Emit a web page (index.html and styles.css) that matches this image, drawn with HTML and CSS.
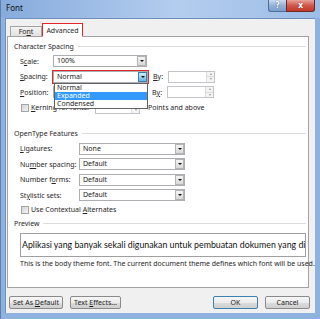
FILE: index.html
```html
<!DOCTYPE html>
<html lang="en">
<head>
    <meta charset="UTF-8">
    <meta name="viewport" content="width=device-width, initial-scale=1.0">
    <title>Font</title>
    <link rel="stylesheet" href="styles.css">
</head>
<body>

    <div class="window">
        <div class="titlebar">
            <span class="title">Font</span>
            <span class="cap-help">?</span>
            <span class="cap-close">x</span>
        </div>

        <div class="client">
            <div class="tabs">
                <span class="tab">Fo<u>n</u>t</span>
                <span class="tab active">Advanced</span>
            </div>

            <div class="panel">
                <div class="group-head"><span>Character Spacing</span></div>

                <div class="row first">
                    <span class="lbl lbl-short">S<u>c</u>ale:</span>
                    <div class="combo combo-mid"><span class="val">100%</span><span class="drop"></span></div>
                </div>

                <div class="row">
                    <span class="lbl lbl-short"><u>S</u>pacing:</span>
                    <div class="combo combo-mid hot">
                        <span class="val">Normal</span><span class="drop"></span>
                        <!-- open list of the spacing combo -->
                        <div class="droplist">
                            <div class="item">Normal</div>
                            <div class="item selected">Expanded</div>
                            <div class="item">Condensed</div>
                        </div>
                    </div>
                    <span class="lbl lbl-by"><u>B</u>y:</span>
                    <div class="spin"><span class="field"></span><span class="arrows"><span class="up"></span><span class="down"></span></span></div>
                </div>

                <div class="row">
                    <span class="lbl lbl-short"><u>P</u>osition:</span>
                    <div class="combo combo-mid"><span class="val">Normal</span><span class="drop"></span></div>
                    <span class="lbl lbl-by">B<u>y</u>:</span>
                    <div class="spin"><span class="field"></span><span class="arrows"><span class="up"></span><span class="down"></span></span></div>
                </div>

                <div class="row">
                    <span class="check"></span>
                    <span class="lbl lbl-kern"><u>K</u>erning for fonts:</span>
                    <div class="spin spin-small"><span class="field"></span><span class="arrows"><span class="up"></span><span class="down"></span></span></div>
                    <span class="lbl lbl-points">Points and above</span>
                </div>

                <div class="group-head gap"><span>OpenType Features</span></div>

                <div class="row first">
                    <span class="lbl lbl-long"><u>L</u>igatures:</span>
                    <div class="combo combo-wide"><span class="val">None</span><span class="drop"></span></div>
                </div>
                <div class="row">
                    <span class="lbl lbl-long">Nu<u>m</u>ber spacing:</span>
                    <div class="combo combo-wide"><span class="val">Default</span><span class="drop"></span></div>
                </div>
                <div class="row">
                    <span class="lbl lbl-long">Number f<u>o</u>rms:</span>
                    <div class="combo combo-wide"><span class="val">Default</span><span class="drop"></span></div>
                </div>
                <div class="row">
                    <span class="lbl lbl-long">St<u>y</u>listic sets:</span>
                    <div class="combo combo-wide"><span class="val">Default</span><span class="drop"></span></div>
                </div>

                <div class="row check-row">
                    <span class="check"></span>
                    <span class="lbl">Use Contextual <u>A</u>lternates</span>
                </div>

                <div class="group-head"><span>Preview</span></div>
                <div class="preview">
                    <span>Aplikasi yang banyak sekali digunakan untuk pembuatan dokumen yang digunakan</span>
                </div>
                <p class="desc">This is the body theme font. The current document theme defines which font will be used.</p>
            </div>

            <div class="button-row">
                <button class="btn btn-default">Set As <u>D</u>efault</button>
                <button class="btn btn-effects">Text <u>E</u>ffects...</button>
                <button class="btn btn-ok">OK</button>
                <button class="btn btn-cancel">Cancel</button>
            </div>
        </div>
    </div>

</body>
</html>
```

FILE: styles.css
```css
* {
    box-sizing: border-box;
}

html,
body {
    margin: 0;
    width: 320px;
    height: 319px;
    overflow: hidden;
}

body {
    font-family: "Noto Sans", sans-serif;
    font-size: 7px;
    color: #262626;
}

u {
    text-decoration-thickness: 0.5px;
    text-underline-offset: 1px;
}

.window {
    width: 320px;
    height: 319px;
    padding: 0 5px 6px 4px;
    display: flex;
    flex-direction: column;
    background: #8fb1dd;
    border-left: 1px solid #5f7fae;
}

/* title bar */
.titlebar {
    height: 18px;
    flex: none;
    display: flex;
    align-items: flex-start;
    background: linear-gradient(to right, #86abdc, #b4cdef 55%, #9dbde6);
    margin: 0 -5px 0 -4px;
    padding: 0 5px 0 4px;
}

.title {
    margin-left: 1px;
    margin-top: 3px;
    margin-right: auto;
    font-size: 8px;
    line-height: 10px;
    color: #111;
}

.cap-help,
.cap-close {
    height: 12px;
    display: flex;
    align-items: center;
    justify-content: center;
    color: #fff;
    font-family: "DejaVu Sans", sans-serif;
    font-weight: bold;
    font-size: 8px;
    text-shadow: 0 0 1px #223;
}

.cap-help {
    width: 18px;
    background: linear-gradient(to bottom, #c9dbf1, #93b2da 50%, #7b9fcf);
    border: 1px solid #4e6c95;
    border-right: none;
    border-top: none;
    border-radius: 0 0 0 3px;
}

.cap-close {
    width: 29px;
    background: linear-gradient(to bottom, #e8a399, #d0574a 50%, #c0392c);
    border: 1px solid #6f2a24;
    border-top: none;
    border-radius: 0 0 3px 0;
}

/* dialog body */
.client {
    flex: 1;
    background: #f0f0f0;
    border-left: 1px solid #6f8fbd;
    border-top: 1px solid #6f8fbd;
    display: flex;
    flex-direction: column;
}

.tabs {
    display: flex;
    align-items: flex-end;
    height: 13px;
    margin-top: 4px;
    padding-left: 4px;
    position: relative;
    z-index: 2;
}

.tab {
    height: 10px;
    width: 32px;
    display: flex;
    align-items: center;
    justify-content: center;
    background: linear-gradient(to bottom, #f3f3f3, #e2e2e2);
    border: 1px solid #a3a3a3;
    border-bottom: none;
}

.tab.active {
    width: 41px;
    height: 14px;
    margin-bottom: -1px;
    background: #fff;
    border: 1.5px solid #e3262a;
    border-bottom: 1px solid #fff;
}

.panel {
    margin-left: 1px;
    width: 302px;
    height: 252px;
    background: #fff;
    border: 1px solid #a3a3a3;
    position: relative;
}

.group-head {
    height: 12px;
    margin-top: 3px;
    padding-left: 6px;
    padding-right: 2px;
    display: flex;
    align-items: center;
}

.group-head::after {
    content: "";
    flex: 1;
    height: 1px;
    margin-left: 4px;
    background: #dcdcdc;
}

.group-head.gap {
    margin-top: 14px;
}

.row {
    height: 12px;
    margin-top: 3px;
    padding-left: 12px;
    display: flex;
    align-items: center;
}

.row + .row {
    margin-top: 3.5px;
}

.check-row {
    height: 10px;
    margin-top: 4px;
}

.lbl {
    white-space: nowrap;
}

.lbl-short {
    width: 33px;
}

.lbl-long {
    width: 59px;
}

.lbl-by {
    width: 15px;
    margin-left: 5px;
}

.lbl-kern {
    width: 64px;
}

.lbl-points {
    margin-left: 8px;
}

/* combo boxes */
.combo {
    position: relative;
    height: 12px;
    display: flex;
    align-items: stretch;
    background: #fff;
    border: 1px solid #abadb3;
}

.combo-mid {
    width: 94px;
}

.combo-wide {
    width: 106px;
}

.combo .val {
    flex: 1;
    padding-left: 3px;
    line-height: 10px;
    color: #1a1a1a;
}

.drop {
    width: 9px;
    display: flex;
    align-items: center;
    justify-content: center;
    background: linear-gradient(to bottom, #f4f4f4, #d9d9d9);
    border: 1px solid #b4b4b4;
}

.drop::after {
    content: "";
    border-left: 2px solid transparent;
    border-right: 2px solid transparent;
    border-top: 2.5px solid #111;
}

.combo.hot {
    width: 95px;
    outline: 1.5px solid #e3262a;
    z-index: 3;
}

.combo.hot .drop {
    background: linear-gradient(to bottom, #d6eefb, #9dd2f0 50%, #6ab6e2);
    border-color: #3c7fb1;
}

.droplist {
    position: absolute;
    top: 11.5px;
    left: 0;
    width: 94px;
    background: #fff;
    border: 1px solid #646464;
    z-index: 4;
}

.item {
    height: 8px;
    line-height: 8px;
    padding-left: 2px;
    color: #1a1a1a;
}

.item.selected {
    background: #3399ff;
    color: #fff;
}

/* spinners */
.spin {
    width: 47px;
    height: 12px;
    display: flex;
    background: #fff;
    border: 1px solid #c2c4ca;
}

.spin-small {
    width: 45px;
}

.spin .field {
    flex: 1;
}

.spin .arrows {
    width: 8px;
    display: flex;
    flex-direction: column;
    border-left: 1px solid #dcdcdc;
}

.spin .arrows span {
    flex: 1;
    display: flex;
    align-items: center;
    justify-content: center;
    background: #f4f4f4;
}

.spin .up {
    border-bottom: 1px solid #dcdcdc;
}

.spin .up::after,
.spin .down::after {
    content: "";
    border-left: 1.5px solid transparent;
    border-right: 1.5px solid transparent;
}

.spin .up::after {
    border-bottom: 2px solid #9a9a9a;
}

.spin .down::after {
    border-top: 2px solid #9a9a9a;
}

.check {
    width: 8px;
    height: 8px;
    margin-left: 1px;
    margin-right: 2px;
    border: 1px solid #a5a5a5;
    background: linear-gradient(135deg, #d4d4d4, #f4f4f4);
}

/* preview */
.preview {
    margin: 3px 2px 0 12px;
    height: 24px;
    border: 1px solid #a0a0a0;
    display: flex;
    align-items: center;
    padding-left: 1px;
    overflow: hidden;
    white-space: nowrap;
}

.preview span {
    font-family: Lato, sans-serif;
    font-size: 8.8px;
    color: #111;
}

.desc {
    margin: 2px 0 0 12px;
    line-height: 10px;
    white-space: nowrap;
    color: #262626;
}

/* buttons */
.button-row {
    margin-top: 8px;
    padding: 0 5px 0 3px;
    display: flex;
}

.btn {
    height: 13px;
    padding: 0;
    font-family: "Noto Sans", sans-serif;
    font-size: 7px;
    color: #1a1a1a;
    border: 1px solid #8a8a8a;
    border-radius: 2px;
    background: linear-gradient(to bottom, #f6f6f6, #ebebeb 50%, #dcdcdc 51%, #cfcfcf);
}

.btn-default {
    width: 54px;
}

.btn-effects {
    width: 51px;
    margin-left: 7px;
}

.btn-ok {
    width: 45px;
    margin-left: auto;
    border-color: #3c7fb1;
}

.btn-cancel {
    width: 45px;
    margin-left: 7px;
}
```
